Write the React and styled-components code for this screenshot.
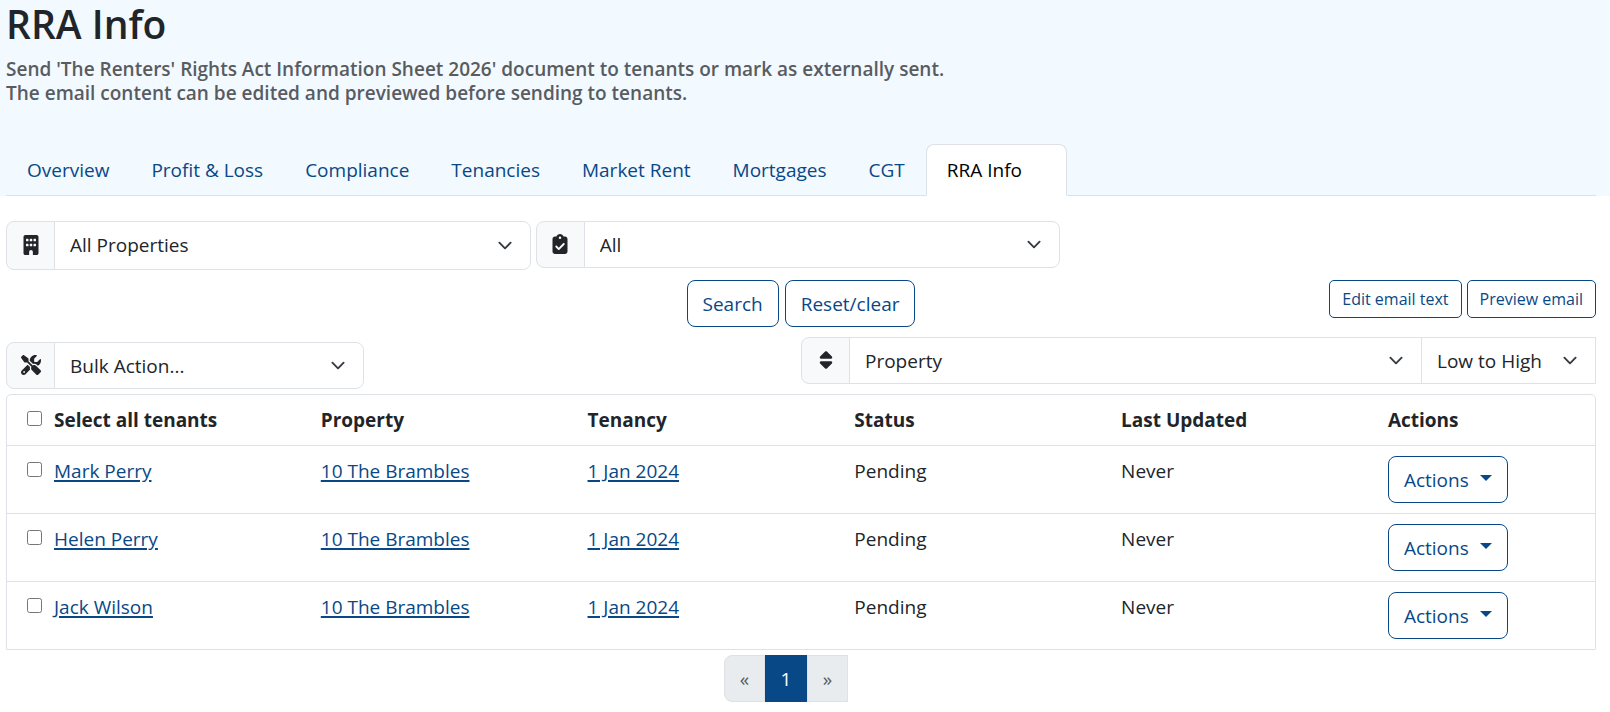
import React from "react";
import styled, { createGlobalStyle } from "styled-components";
import { FaBuilding, FaClipboardCheck, FaScrewdriverWrench, FaSort } from "react-icons/fa6";

const c = {
  primary: "#084887",
  text: "#212529",
  muted: "#595c5f",
  line: "#dee2e6",
  addon: "#f8f9fa",
  header: "#f2f9ff",
};

const Global = createGlobalStyle`
  *, *::before, *::after { box-sizing: border-box; }
  body {
    margin: 0;
    background: #fff;
    color: ${c.text};
    font: 400 19px/30px "Segoe UI", "Open Sans", "Liberation Sans", sans-serif;
  }
  button, select, input { font: inherit; color: inherit; margin: 0; }
`;

const Header = styled.header`
  background: ${c.header};
  padding: 0 14px 0 6px;
`;

const Title = styled.h1`
  margin: 0;
  font-size: 39px;
  line-height: 48px;
  font-weight: 600;
`;

const Intro = styled.p`
  margin: 9px 0 0;
  color: ${c.muted};
  font-weight: 600;
  line-height: 24px;
`;

const Tabs = styled.nav`
  display: flex;
  margin-top: 39px;
  border-bottom: 1px solid ${c.line};
`;

const Tab = styled.a`
  padding: 10px ${(p) => (p.$active ? 44 : 20)}px 10px 20px;
  margin-bottom: -1px;
  border: 1px solid transparent;
  border-color: ${(p) => (p.$active ? `${c.line} ${c.line} #fff` : "transparent")};
  border-radius: 8px 8px 0 0;
  background: ${(p) => (p.$active ? "#fff" : "transparent")};
  color: ${(p) => (p.$active ? "#000" : c.primary)};
  text-decoration: none;
  white-space: nowrap;
`;

const Main = styled.main`
  padding: 25px 14px 10px 6px;
`;

const Filters = styled.div`
  display: flex;
  align-items: flex-start;
  gap: 5px;
`;

const Group = styled.div`
  display: flex;
  width: ${(p) => p.$width};
  min-height: ${(p) => (p.$tall ? 49 : 47)}px;
`;

const Addon = styled.label`
  display: flex;
  align-items: center;
  justify-content: center;
  flex: none;
  width: 49px;
  background: ${c.addon};
  border: 1px solid ${c.line};
  border-radius: 8px 0 0 8px;
  font-size: 20px;
  padding-bottom: 2px;
`;

const chevron =
  "data:image/svg+xml,%3csvg xmlns='http://www.w3.org/2000/svg' viewBox='0 0 16 16'%3e%3cpath fill='none' stroke='%23343a40' stroke-linecap='round' stroke-linejoin='round' stroke-width='2' d='m2 5 6 6 6-6'/%3e%3c/svg%3e";

const Select = styled.select`
  appearance: none;
  flex: ${(p) => (p.$width ? `0 0 ${p.$width}` : "1 1 0")};
  min-width: 0;
  margin-left: -1px;
  padding: 0 40px ${(p) => (p.$tall ? 2 : 0)}px 15px;
  border: 1px solid ${c.line};
  border-radius: ${(p) => (p.$square ? "0" : "0 8px 8px 0")};
  background: #fff url("${chevron}") no-repeat right 15px center / 20px 15px;
`;

const Commands = styled.div`
  display: grid;
  grid-template-columns: 1fr auto 1fr;
  align-items: start;
  margin-top: 10px;
`;

const ButtonRow = styled.div`
  display: flex;
  gap: ${(p) => p.$gap}px;
  grid-column: ${(p) => p.$column};
  justify-content: flex-end;
`;

const Button = styled.button`
  height: 47px;
  padding: 0 15px;
  border: 1px solid ${c.primary};
  border-radius: 8px;
  background: #fff;
  color: ${c.primary};
  white-space: nowrap;
  cursor: pointer;
`;

const SmallButton = styled(Button)`
  height: 38px;
  padding: 0 12px;
  border-radius: 5px;
  font-size: 16px;
`;

const ListTools = styled.div`
  display: flex;
  justify-content: space-between;
  align-items: flex-end;
  margin: 10px 0 5px;
`;

const SortSlot = styled.div`
  width: 50%;
  padding-bottom: 5px;
`;

const TableFrame = styled.div`
  border: 1px solid ${c.line};
  border-radius: 5px 5px 0 0;
`;

const Table = styled.table`
  width: 100%;
  table-layout: fixed;
  border-spacing: 0;
`;

const HeadCell = styled.th`
  width: ${(p) => p.$width};
  padding: 10px 0 10px 20px;
  text-align: left;
  font-weight: 700;
`;

const Cell = styled.td`
  padding: 10px 0 10px 20px;
  vertical-align: top;
  border-top: 1px solid ${c.line};
`;

const Pick = styled.div`
  display: flex;
  gap: 12px;
`;

const Check = styled.input`
  flex: none;
  width: 15px;
  height: 15px;
  margin-top: 6px;
`;

const Link = styled.a`
  color: ${c.primary};
  text-decoration: underline;
  text-decoration-thickness: 2px;
  text-underline-offset: 2px;
`;

const Caret = styled.span`
  display: inline-block;
  margin-left: 11px;
  vertical-align: 6px;
  border-top: 6px solid;
  border-right: 6px solid transparent;
  border-left: 6px solid transparent;
`;

const Pager = styled.nav`
  display: flex;
  justify-content: center;
  padding: 5px 30px 0 0;
`;

const PageButton = styled.button`
  width: ${(p) => (p.$current ? 42 : 41)}px;
  height: 47px;
  padding: 0;
  border: 1px solid ${(p) => (p.$current ? c.primary : c.line)};
  border-radius: ${(p) => (p.$first ? "8px 0 0 8px" : "0")};
  background: ${(p) => (p.$current ? c.primary : "#e9ecef")};
  color: ${(p) => (p.$current ? "#fff" : "#595c5f")};
`;

const tabs = ["Overview", "Profit & Loss", "Compliance", "Tenancies", "Market Rent", "Mortgages", "CGT", "RRA Info"];

const tenants = [
  { name: "Mark Perry", property: "10 The Brambles", tenancy: "1 Jan 2024", status: "Pending", updated: "Never" },
  { name: "Helen Perry", property: "10 The Brambles", tenancy: "1 Jan 2024", status: "Pending", updated: "Never" },
  { name: "Jack Wilson", property: "10 The Brambles", tenancy: "1 Jan 2024", status: "Pending", updated: "Never" },
];

function SelectGroup({ id, label, icon, option, width, tall }) {
  return (
    <Group $width={width} $tall={tall}>
      <Addon htmlFor={id} aria-label={label}>{icon}</Addon>
      <Select id={id} $tall={tall}>
        <option>{option}</option>
      </Select>
    </Group>
  );
}

export default function App() {
  return (
    <>
      <Global />
      <Header>
        <Title>RRA Info</Title>
        <Intro>
          Send 'The Renters' Rights Act Information Sheet 2026' document to tenants or mark as externally sent.
          <br />
          The email content can be edited and previewed before sending to tenants.
        </Intro>
        <Tabs>
          {tabs.map((t) => (
            <Tab key={t} href="#" $active={t === "RRA Info"}>{t}</Tab>
          ))}
        </Tabs>
      </Header>
      <Main>
        <Filters>
          <SelectGroup id="property" label="Property" icon={<FaBuilding />} option="All Properties" width="33%" tall />
          <SelectGroup id="status" label="Status" icon={<FaClipboardCheck />} option="All" width="33%" />
        </Filters>
        <Commands>
          <ButtonRow $gap={6} $column={2}>
            <Button type="button">Search</Button>
            <Button type="button">Reset/clear</Button>
          </ButtonRow>
          <ButtonRow $gap={5} $column={3}>
            <SmallButton type="button">Edit email text</SmallButton>
            <SmallButton type="button">Preview email</SmallButton>
          </ButtonRow>
        </Commands>
        <ListTools>
          <SelectGroup id="bulk" label="Bulk action" icon={<FaScrewdriverWrench />} option="Bulk Action..." width="22.5%" />
          <SortSlot>
            <Group $width="100%">
              <Addon htmlFor="sort" aria-label="Sort by"><FaSort /></Addon>
              <Select id="sort" $square>
                <option>Property</option>
              </Select>
              <Select aria-label="Sort order" $square $width="175px">
                <option>Low to High</option>
              </Select>
            </Group>
          </SortSlot>
        </ListTools>
        <TableFrame>
          <Table>
            <thead>
              <tr>
                <HeadCell $width="18.5%">
                  <Pick>
                    <Check type="checkbox" id="all" />
                    <label htmlFor="all">Select all tenants</label>
                  </Pick>
                </HeadCell>
                <HeadCell $width="16.8%">Property</HeadCell>
                <HeadCell $width="16.8%">Tenancy</HeadCell>
                <HeadCell $width="16.8%">Status</HeadCell>
                <HeadCell $width="16.8%">Last Updated</HeadCell>
                <HeadCell>Actions</HeadCell>
              </tr>
            </thead>
            <tbody>
              {tenants.map((t) => (
                <tr key={t.name}>
                  <Cell>
                    <Pick>
                      <Check type="checkbox" aria-label={t.name} />
                      <Link href="#">{t.name}</Link>
                    </Pick>
                  </Cell>
                  <Cell><Link href="#">{t.property}</Link></Cell>
                  <Cell><Link href="#">{t.tenancy}</Link></Cell>
                  <Cell>{t.status}</Cell>
                  <Cell>{t.updated}</Cell>
                  <Cell><Button type="button">Actions<Caret /></Button></Cell>
                </tr>
              ))}
            </tbody>
          </Table>
        </TableFrame>
        <Pager aria-label="Pages">
          <PageButton type="button" $first aria-label="Previous">«</PageButton>
          <PageButton type="button" $current>1</PageButton>
          <PageButton type="button" aria-label="Next">»</PageButton>
        </Pager>
      </Main>
    </>
  );
}
